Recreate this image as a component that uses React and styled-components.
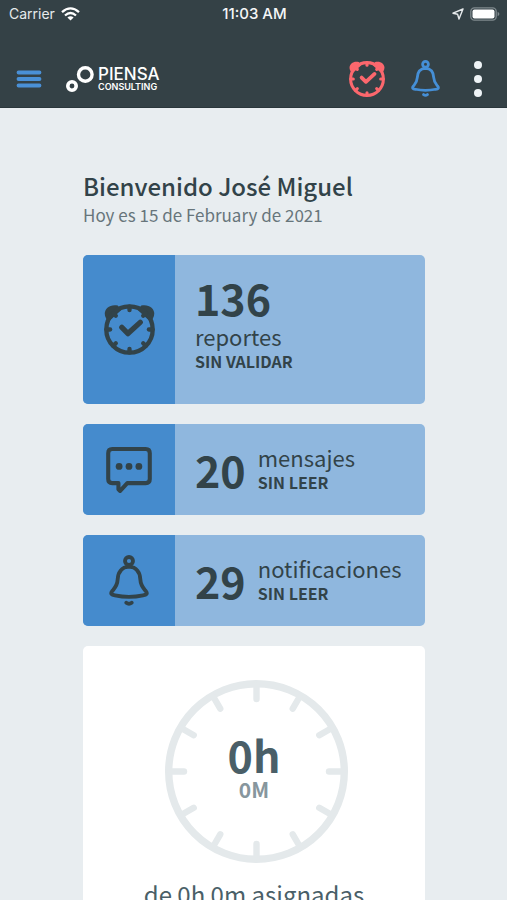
import React from "react";
import styled, { createGlobalStyle } from "styled-components";

const GlobalStyle = createGlobalStyle`
  *, *::before, *::after { box-sizing: border-box; }
  body {
    margin: 0;
    background: #e8edf0;
    color: #324349;
    font-family: "Noto Sans CJK SC", "Open Sans", sans-serif;
  }
  button { border: 0; padding: 0; background: none; cursor: pointer; }
`;

const Screen = styled.div`
  display: flex;
  flex-direction: column;
  height: 100vh;
`;

const Header = styled.header`
  flex: none;
  background: #344146;
  border-bottom: 1px solid #2a363b;
`;

const StatusBar = styled.div`
  display: grid;
  grid-template-columns: 1fr auto 1fr;
  align-items: center;
  height: 28px;
  padding: 0 7px 0 9px;
  color: #e6eaec;
  font: 400 14px/20px Inter, sans-serif;
`;

const StatusGroup = styled.div`
  display: flex;
  align-items: center;
  justify-content: ${(p) => (p.$end ? "flex-end" : "flex-start")};
  gap: 6px;
`;

const Time = styled.time`
  color: #f4f6f7;
  font-size: 15px;
  font-weight: 500;
`;

const NavBar = styled.nav`
  display: flex;
  align-items: center;
  height: 79px;
  padding: 22px 17px 0 16px;
`;

const IconButton = styled.button`
  display: flex;
  align-items: center;
  justify-content: center;
  color: ${(p) => p.$color};
`;

const Actions = styled.div`
  display: flex;
  align-items: center;
  gap: 26px;
  margin-left: auto;
`;

const Brand = styled.a`
  display: flex;
  align-items: center;
  gap: 4px;
  margin-left: 24px;
  color: #ffffff;
  text-decoration: none;
`;

const BrandText = styled.span`
  display: flex;
  flex-direction: column;
  font-family: Inter, sans-serif;
`;

const BrandName = styled.span`
  font-size: 17px;
  font-weight: 500;
  line-height: 16px;
`;

const BrandTag = styled.span`
  font-size: 9px;
  font-weight: 600;
  line-height: 10px;
`;

const Content = styled.main`
  flex: 1;
  min-height: 0;
  overflow-y: auto;
  scrollbar-width: none;
  padding: 63px 82px 0 83px;
`;

const Title = styled.h1`
  margin: 0;
  font-size: 24px;
  font-weight: 500;
  line-height: 30px;
`;

const Today = styled.p`
  margin: 0;
  color: #67757b;
  font-size: 17px;
  line-height: 28px;
`;

const Cards = styled.div`
  display: flex;
  flex-direction: column;
  gap: 20px;
  margin-top: 26px;
`;

const Card = styled.section`
  display: flex;
  min-height: ${(p) => (p.$tall ? "149px" : "91px")};
  border-radius: 5px;
  overflow: hidden;
  background: #8fb7de;
`;

const CardIcon = styled.div`
  display: flex;
  flex: none;
  align-items: center;
  justify-content: center;
  width: 92px;
  background: #458bcd;
`;

const CardBody = styled.div`
  display: flex;
  flex-direction: ${(p) => (p.$stacked ? "column" : "row")};
  align-items: ${(p) => (p.$stacked ? "flex-start" : "center")};
  justify-content: ${(p) => (p.$stacked ? "center" : "flex-start")};
  gap: ${(p) => (p.$stacked ? "0" : "12px")};
  padding: ${(p) => (p.$stacked ? "0 0 16px 20px" : "0 0 2px 20px")};
`;

const Count = styled.strong`
  font-size: 43px;
  font-weight: 700;
  line-height: 52px;
`;

const Label = styled.div`
  display: flex;
  flex-direction: column;
`;

const LabelName = styled.span`
  font-size: 22px;
  line-height: 26px;
`;

const LabelState = styled.span`
  font-size: 16px;
  font-weight: 700;
  line-height: 24px;
`;

const HoursCard = styled.section`
  display: flex;
  flex-direction: column;
  align-items: center;
  padding: 34px 0 40px;
  border-radius: 5px;
  background: #ffffff;
`;

const Gauge = styled.div`
  display: grid;
  place-items: center;

  > * { grid-area: 1 / 1; }
`;

const GaugeValue = styled.div`
  display: flex;
  flex-direction: column;
  align-items: center;
  padding-bottom: 10px;
`;

const Hours = styled.strong`
  color: #4a5f68;
  font-size: 43px;
  font-weight: 700;
  line-height: 44px;
`;

const Minutes = styled.span`
  color: #87969d;
  font-size: 21px;
  font-weight: 700;
  line-height: 26px;
`;

const Assigned = styled.p`
  margin: 14px 0 0;
  color: #4a5f68;
  font-size: 24px;
  line-height: 34px;
`;

const polar = (cx, cy, r, deg) => {
  const a = (deg * Math.PI) / 180;
  return [cx + r * Math.cos(a), cy + r * Math.sin(a)];
};

function Ticks({ cx, cy, from, to, step }) {
  const lines = [];
  for (let deg = 0; deg < 360; deg += step) {
    const [x1, y1] = polar(cx, cy, from, deg);
    const [x2, y2] = polar(cx, cy, to, deg);
    lines.push(<line key={deg} x1={x1} y1={y1} x2={x2} y2={y2} />);
  }
  return lines;
}

function AlarmIcon({ size }) {
  return (
    <svg width={size} height={size} viewBox="0 0 100 100" fill="none" stroke="currentColor" strokeLinecap="round" strokeLinejoin="round" aria-hidden="true">
      <path d="M4 28C-4 14 8 -1 27 3L34 12L10 34Z" fill="currentColor" stroke="none" />
      <path d="M96 28C104 14 92 -1 73 3L66 12L90 34Z" fill="currentColor" stroke="none" />
      <circle cx="50" cy="50" r="45.5" strokeWidth="8.5" />
      <g strokeWidth="8.5">
        <Ticks cx={50} cy={50} from={38} to={45} step={45} />
      </g>
      <path d="M35 46L47 58L71 36" strokeWidth="10.5" />
    </svg>
  );
}

function BellIcon({ width, height }) {
  return (
    <svg width={width} height={height} viewBox="0 0 118 153" fill="none" stroke="currentColor" strokeWidth="11.5" strokeLinecap="round" strokeLinejoin="round" aria-hidden="true">
      <circle cx="59" cy="18" r="12" />
      <path d="M59 35C36 36 26 53 25 73C24 93 15 100 8 109C3 116 6 119 17 121C45 127 73 127 101 121C112 119 115 116 110 109C103 100 94 93 93 73C92 53 82 36 59 35Z" />
      <path d="M51 143Q59 149 67 143" />
    </svg>
  );
}

function MessageIcon() {
  return (
    <svg width="46" height="46" viewBox="0 0 134 135" fill="none" stroke="currentColor" strokeWidth="12" strokeLinecap="round" strokeLinejoin="round" aria-hidden="true">
      <path d="M18 6H116Q128 6 128 18V94Q128 106 116 106H62L41 129L36 124V106H18Q6 106 6 94V18Q6 6 18 6Z" />
      <g fill="currentColor" stroke="none">
        <circle cx="38" cy="57" r="10" />
        <circle cx="67" cy="57" r="10" />
        <circle cx="96" cy="57" r="10" />
      </g>
    </svg>
  );
}

function MenuIcon() {
  return (
    <svg width="26" height="18" viewBox="0 0 26 18" fill="none" stroke="currentColor" strokeWidth="3.8" strokeLinecap="round" aria-hidden="true">
      <path d="M2.5 2.5H23.5M2.5 9H23.5M2.5 15.5H23.5" />
    </svg>
  );
}

function MoreIcon() {
  return (
    <svg width="24" height="36" viewBox="0 0 24 36" fill="currentColor" aria-hidden="true">
      <circle cx="12" cy="4" r="4" />
      <circle cx="12" cy="18" r="4" />
      <circle cx="12" cy="32" r="4" />
    </svg>
  );
}

function BrandMark() {
  return (
    <svg width="28" height="28" viewBox="0 0 28 28" fill="none" stroke="currentColor" aria-hidden="true">
      <circle cx="19.3" cy="9.5" r="6.8" strokeWidth="3.4" />
      <circle cx="6" cy="21" r="4.2" strokeWidth="3.6" />
    </svg>
  );
}

function WifiIcon() {
  return (
    <svg width="19" height="14" viewBox="0 0 19 14" fill="none" stroke="#ffffff" strokeWidth="2.3" aria-hidden="true">
      <path d="M1 5.2Q9.5 -2.4 18 5.2" />
      <path d="M4 8.5Q9.5 3.6 15 8.5" />
      <path d="M9.5 13.6L6.4 10.5Q9.5 7.9 12.6 10.5Z" fill="#ffffff" stroke="none" />
    </svg>
  );
}

function LocationIcon() {
  return (
    <svg width="12" height="12" viewBox="0 0 12 12" fill="none" stroke="currentColor" strokeWidth="1.4" strokeLinejoin="round" aria-hidden="true">
      <path d="M11 1L1 5.2L5.6 6.2L7 11Z" />
    </svg>
  );
}

function BatteryIcon() {
  return (
    <svg width="30" height="14" viewBox="0 0 30 14" aria-hidden="true">
      <rect x="0.8" y="0.8" width="25.4" height="12.4" rx="3.6" fill="none" stroke="#7f898d" strokeWidth="1.3" />
      <rect x="2.5" y="2.5" width="22" height="9" rx="2" fill="#ffffff" />
      <path d="M27.6 4.8Q29.4 5.6 29.4 7T27.6 9.2Z" fill="#7f898d" />
    </svg>
  );
}

function Dial() {
  return (
    <svg width="187" height="183" viewBox="-4 0 187 183" fill="none" stroke="#e4e9eb" strokeLinecap="round" aria-hidden="true">
      <circle cx="91.5" cy="91.5" r="87.8" strokeWidth="7.4" />
      <g strokeWidth="6.4">
        <Ticks cx={91.5} cy={91.5} from={72.5} to={86} step={30} />
      </g>
    </svg>
  );
}

function SummaryCard({ icon, count, name, state, stacked }) {
  return (
    <Card $tall={stacked}>
      <CardIcon>{icon}</CardIcon>
      <CardBody $stacked={stacked}>
        <Count>{count}</Count>
        <Label>
          <LabelName>{name}</LabelName>
          <LabelState>{state}</LabelState>
        </Label>
      </CardBody>
    </Card>
  );
}

export default function App() {
  return (
    <Screen>
      <GlobalStyle />
      <Header>
        <StatusBar>
          <StatusGroup>
            <span>Carrier</span>
            <WifiIcon />
          </StatusGroup>
          <Time>11:03 AM</Time>
          <StatusGroup $end>
            <LocationIcon />
            <BatteryIcon />
          </StatusGroup>
        </StatusBar>
        <NavBar>
          <IconButton $color="#4a90d6" aria-label="Menú">
            <MenuIcon />
          </IconButton>
          <Brand href="#">
            <BrandMark />
            <BrandText>
              <BrandName>PIENSA</BrandName>
              <BrandTag>CONSULTING</BrandTag>
            </BrandText>
          </Brand>
          <Actions>
            <IconButton $color="#fb676d" aria-label="Reportes">
              <AlarmIcon size={36} />
            </IconButton>
            <IconButton $color="#458fd6" aria-label="Notificaciones">
              <BellIcon width={29} height={37} />
            </IconButton>
            <IconButton $color="#eef3f6" aria-label="Más opciones">
              <MoreIcon />
            </IconButton>
          </Actions>
        </NavBar>
      </Header>
      <Content>
        <Title>Bienvenido José Miguel</Title>
        <Today>Hoy es 15 de February de 2021</Today>
        <Cards>
          <SummaryCard stacked icon={<AlarmIcon size={51} />} count="136" name="reportes" state="SIN VALIDAR" />
          <SummaryCard icon={<MessageIcon />} count="20" name="mensajes" state="SIN LEER" />
          <SummaryCard icon={<BellIcon width={40} height={51} />} count="29" name="notificaciones" state="SIN LEER" />
          <HoursCard>
            <Gauge>
              <Dial />
              <GaugeValue>
                <Hours>0h</Hours>
                <Minutes>0M</Minutes>
              </GaugeValue>
            </Gauge>
            <Assigned>de 0h 0m asignadas</Assigned>
          </HoursCard>
        </Cards>
      </Content>
    </Screen>
  );
}
